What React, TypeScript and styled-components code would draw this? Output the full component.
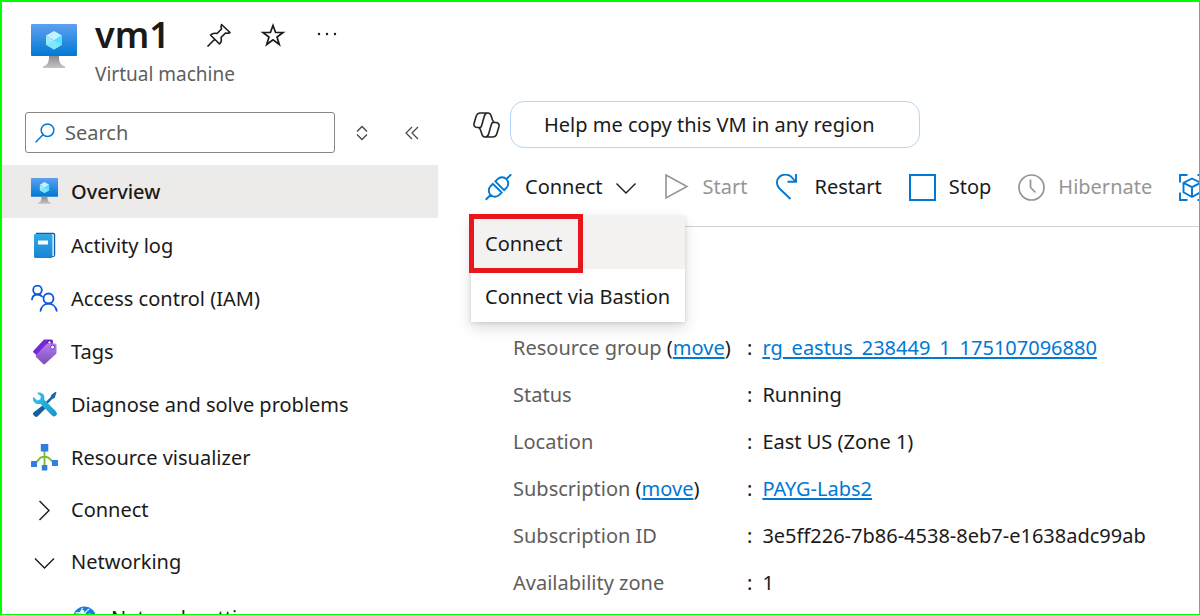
import React from "react";
import styled, { createGlobalStyle, css } from "styled-components";

const GlobalStyle = createGlobalStyle`
  *, *::before, *::after { box-sizing: border-box; }
  body {
    margin: 0;
    background: #fff;
    color: #1b1a19;
    font-family: "Noto Sans", "Open Sans", sans-serif;
    font-size: 20px;
    line-height: 28px;
  }
  button, input { font: inherit; color: inherit; }
  svg { display: block; flex: none; }
`;

const blue = "#0078d4";

const Page = styled.div`
  display: flex;
  flex-direction: column;
  height: 100vh;
  overflow: hidden;
  border: 2px solid #00ff00;
  border-width: 2px 1px 1px 2px;
`;

const Header = styled.header`
  display: flex;
  gap: 18px;
  padding: 10px 28px 0 29px;
  height: 99px;
`;

const HeaderIcon = styled.div`
  padding-top: 12px;
`;

const TitleRow = styled.div`
  display: flex;
  align-items: center;
  gap: 28px;
  height: 46px;
`;

const Title = styled.h1`
  margin: 0 8px 0 0;
  font-size: 36px;
  font-weight: 600;
  line-height: 46px;
`;

const Subtitle = styled.div`
  padding-top: 2px;
  color: #605e5c;
  font-size: 19px;
`;

const IconButton = styled.button`
  display: flex;
  flex: none;
  align-items: center;
  justify-content: center;
  width: 26px;
  height: 26px;
  padding: 0;
  border: 0;
  background: none;
  cursor: pointer;
`;

const Body = styled.div`
  display: flex;
  flex: 1;
  min-height: 0;
`;

const Sidebar = styled.nav`
  flex: none;
  width: 436px;
`;

const SearchRow = styled.div`
  display: flex;
  align-items: center;
  gap: 14px;
  padding: 11px 13px 12px 23px;
`;

const SearchActions = styled.div`
  display: flex;
  gap: 24px;
`;

const SearchBox = styled.label`
  display: flex;
  align-items: center;
  gap: 10px;
  flex: 1;
  min-width: 0;
  height: 41px;
  padding: 0 9px;
  border: 1px solid #8a8886;
  border-radius: 3px;
`;

const SearchInput = styled.input`
  flex: 1;
  min-width: 0;
  padding: 0;
  border: 0;
  outline: 0;
  background: none;
  &::placeholder { color: #605e5c; opacity: 1; }
`;

const NavList = styled.ul`
  margin: 0;
  padding: 0;
  list-style: none;
`;

const rowHeight = { item: 53, group: 52, nested: 60 };

const NavLink = styled.a<{ $active?: boolean; $kind: keyof typeof rowHeight }>`
  display: flex;
  align-items: center;
  gap: 13px;
  height: ${(p) => rowHeight[p.$kind]}px;
  padding-left: ${(p) => (p.$kind === "nested" ? 69 : 29)}px;
  color: inherit;
  text-decoration: none;
  ${(p) =>
    p.$active &&
    css`
      margin-bottom: 1px;
      background: #edebe9;
      font-weight: 500;
    `}
`;

const Main = styled.main`
  flex: 1;
  min-width: 0;
  padding-left: 33px;
`;

const CopilotRow = styled.div`
  display: flex;
  align-items: center;
  gap: 10px;
  padding-left: 2px;
`;

const Suggestion = styled.button`
  min-width: 410px;
  height: 47px;
  padding: 0 33px;
  border: 1px solid #b4d6fa;
  border-radius: 14px;
  background: #fff;
  text-align: left;
  cursor: pointer;
`;

const CommandBar = styled.div`
  position: relative;
  border-bottom: 1px solid #d2d0ce;
`;

const Commands = styled.div`
  display: flex;
  gap: 27px;
  height: 78px;
  padding-left: 14px;
  overflow: hidden;
`;

const Command = styled.button`
  display: flex;
  flex: none;
  align-items: center;
  gap: 13px;
  padding: 0;
  border: 0;
  background: none;
  white-space: nowrap;
  cursor: pointer;
  &:disabled { color: #979593; cursor: default; }
`;

const Menu = styled.div`
  position: absolute;
  top: 68px;
  left: 0;
  background: #fff;
  box-shadow: 0 6px 14px rgba(0, 0, 0, 0.14), 0 1px 4px rgba(0, 0, 0, 0.12);
`;

const MenuItem = styled.button<{ $hovered?: boolean }>`
  display: block;
  width: 100%;
  height: 53px;
  padding: 2px 15px 0 14px;
  border: 0;
  background: ${(p) => (p.$hovered ? "#f3f2f1" : "#fff")};
  text-align: left;
  cursor: pointer;
`;

const Highlight = styled.div`
  position: absolute;
  top: -2px;
  left: -2px;
  width: 114px;
  height: 59px;
  border: 5px solid #e8171b;
  pointer-events: none;
`;

const Details = styled.dl`
  display: grid;
  grid-template-columns: 234px 1fr;
  grid-auto-rows: 47px;
  align-items: center;
  margin: 0;
  padding: 97px 0 0 42px;
`;

const Term = styled.dt`
  color: #605e5c;
  white-space: nowrap;
`;

const Value = styled.dd`
  display: flex;
  gap: 10px;
  margin: 0;
  white-space: nowrap;
  &::before { content: ":"; }
`;

const Dark = styled.span`
  color: #1b1a19;
`;

const Link = styled.a`
  color: ${blue};
  text-decoration: underline;
  text-decoration-thickness: 2px;
  text-underline-offset: 2px;
`;

const VmIcon = ({ size, id }: { size: number; id: string }) => (
  <svg width={size} height={size} viewBox="0 0 46 46" aria-hidden="true">
    <defs>
      <linearGradient id={id} x1="0" y1="0" x2="0" y2="1">
        <stop offset="0" stopColor="#5ea0ef" />
        <stop offset="1" stopColor="#0078d4" />
      </linearGradient>
      <linearGradient id={id + "s"} x1="0" y1="0" x2="0" y2="1">
        <stop offset="0" stopColor="#8c8c8c" />
        <stop offset="1" stopColor="#c4c4c4" />
      </linearGradient>
    </defs>
    <rect width="46" height="32" y="0" rx="1" fill={`url(#${id})`} />
    <path d="M18 32h10c0 6 1 9 6 10.500V44H12v-1.500c5-1.500 6-4.500 6-10.500z" fill={`url(#${id}s)`} />
    <path d="M23 7l8 4.500-8 5-8-5z" fill="#c3f1ff" />
    <path d="M15 11.500l8 5V25.500l-8-4.800z" fill="#9cebff" />
    <path d="M31 11.500l-8 5V25.500l8-4.800z" fill="#50e6ff" />
    <path d="M15 20.700l8-4.200 8 4.200-8 4.800z" fill="#7fe6fb" />
  </svg>
);

const PinIcon = () => (
  <svg width="26" height="26" viewBox="0 0 26 26" fill="none" stroke="#1b1a19" strokeWidth="1.600" strokeLinejoin="round" aria-hidden="true">
    <path d="M1.500 24.500L9 17M15.500 2.500l8.500 8c-1.500 1-3 1-4.500.5l-4.500 4.500c.8 2.500.2 4.800-1.500 6.500L4.500 13c1.800-1.700 4-2.200 6.500-1.500l4.500-4.500c-.6-1.500-.6-3 0-4.500z" />
  </svg>
);

const StarIcon = () => (
  <svg width="26" height="26" viewBox="0 0 26 26" fill="none" stroke="#1b1a19" strokeWidth="1.700" aria-hidden="true">
    <path d="M13 3.500l2.600 7H23l-6 4.600 2.300 7.400-6.300-4.600-6.300 4.600L9 15.100l-6-4.600h7.400z" />
  </svg>
);

const MoreIcon = () => (
  <svg width="26" height="26" viewBox="0 0 26 26" fill="#1b1a19" aria-hidden="true">
    <circle cx="5" cy="12" r="1.200" />
    <circle cx="13" cy="12" r="1.200" />
    <circle cx="21" cy="12" r="1.200" />
  </svg>
);

const SearchIcon = () => (
  <svg width="20" height="20" viewBox="0 0 20 20" fill="none" stroke={blue} strokeWidth="1.500" aria-hidden="true">
    <circle cx="12.500" cy="7.200" r="6.300" />
    <path d="M8 11.800L.6 19.200" />
  </svg>
);

const SortIcon = () => (
  <svg width="14" height="16" viewBox="0 0 14 16" fill="none" stroke="#484644" strokeWidth="1.300" aria-hidden="true">
    <path d="M2 6.500l5-5 5 5M2 9.500l5 5 5-5" />
  </svg>
);

const CollapseIcon = () => (
  <svg width="14" height="14" viewBox="0 0 14 14" fill="none" stroke="#484644" strokeWidth="1.200" aria-hidden="true">
    <path d="M7 1L1 7l6 6M13 1L7 7l6 6" />
  </svg>
);

const LogIcon = () => (
  <svg width="27" height="27" viewBox="0 0 27 27" aria-hidden="true">
    <defs>
      <linearGradient id="log" x1="0" y1="0" x2="0" y2="1">
        <stop offset="0" stopColor="#32a9e4" />
        <stop offset="1" stopColor="#1784d6" />
      </linearGradient>
    </defs>
    <path d="M5 .8h17.500a1.700 1.700 0 0 1 1.700 1.700V23a2 2 0 0 1-2 2H5z" fill="#0f5ea8" />
    <path d="M5 2.200h17.800V24H6z" fill="#fff" />
    <path d="M3 3.500C3 2 4 1.500 5 2h15a1.500 1.500 0 0 1 1.500 1.500V24.500a1.500 1.500 0 0 1-1.500 1.500H4.500A1.500 1.500 0 0 1 3 24.500z" fill="url(#log)" />
    <rect x="7" y="8.500" width="10" height="4" rx=".5" fill="#fff" />
  </svg>
);

const PeopleIcon = () => (
  <svg width="27" height="27" viewBox="0 0 27 27" fill="none" stroke="#0f56d9" strokeWidth="1.800" strokeLinecap="round" aria-hidden="true">
    <circle cx="6.500" cy="5" r="4.300" />
    <path d="M1 14.500c.4-3 2.500-5 5.500-5 2 0 3.500.7 4.500 2" />
    <circle cx="17.500" cy="13.500" r="5" />
    <path d="M9.500 25.800c.8-4.300 4-7.200 8-7.200s7.300 2.900 8.200 7.200" />
  </svg>
);

const TagIcon = () => (
  <svg width="27" height="27" viewBox="0 0 27 27" aria-hidden="true">
    <defs>
      <linearGradient id="tag" x1="0" y1="0" x2="0" y2="1">
        <stop offset="0" stopColor="#b77af4" />
        <stop offset="1" stopColor="#7a50b4" />
      </linearGradient>
    </defs>
    <path d="M13 1.500h7.500a1.500 1.500 0 0 1 1.500 1.500v7L9.500 20.500 2.500 14.500a1.200 1.200 0 0 1 0-1.800z" fill="#7529d3" />
    <circle cx="18.500" cy="4.500" r="1.700" fill="#fff" stroke="#4a1795" />
    <path d="M17 5.500h7a1.500 1.500 0 0 1 1.500 1.500v7.500a2 2 0 0 1-.6 1.400L14 26a1.300 1.300 0 0 1-1.800 0L5 19a1.300 1.300 0 0 1 0-1.800L15.500 6a2 2 0 0 1 1.500-.5z" fill="url(#tag)" />
    <circle cx="21.500" cy="9.200" r="2" fill="#fff" stroke="#6a35b0" />
  </svg>
);

const ToolsIcon = () => (
  <svg width="27" height="27" viewBox="0 0 27 27" aria-hidden="true">
    <defs>
      <linearGradient id="wrench" x1="0" y1="0" x2="1" y2="1">
        <stop offset="0" stopColor="#36c5ea" />
        <stop offset="1" stopColor="#1a93c8" />
      </linearGradient>
    </defs>
    <path d="M25.500 1.500l-1-.7-4 3-1 2.500-6 6 1.800 1.800 6-6 2.300-1.200z" fill="#1569a8" />
    <path d="M11.500 14.500l3 3-7.700 7.700a2.200 2.200 0 0 1-3 0l-1.300-1.300a1.600 1.600 0 0 1 0-2.400z" fill="#12609f" />
    <path d="M6 2c3-1.200 6.300.2 7.300 3.200.3 1.200.2 2.300-.2 3.400L25 20.500a3 3 0 0 1 0 4 3 3 0 0 1-4 0L9.300 12.800C6 14 3 12 2.200 9.500c-.4-1.300-.3-2.600.2-3.700l3.800 3.600 3-.8.700-3z" fill="url(#wrench)" />
  </svg>
);

const VisualizerIcon = () => (
  <svg width="27" height="27" viewBox="0 0 27 27" aria-hidden="true">
    <path d="M13.500 7v15M13.500 13h-2C8 13 8 17 3.500 19.500M13.500 13h2c3.500 0 3.500 4 8 6" fill="none" stroke="#76bc2d" strokeWidth="1.800" />
    <g fill="#2f7fe0">
      <rect x="9.800" y="0" width="7.500" height="7.500" rx=".5" />
      <rect x="0" y="17" width="6" height="6" rx=".5" />
      <rect x="10.800" y="21" width="5.500" height="5.500" rx=".5" />
      <rect x="21" y="16" width="6" height="6" rx=".5" />
    </g>
  </svg>
);

const ChevronIcon = ({ direction, box = 27 }: { direction: "right" | "down"; box?: number }) => (
  <svg width={box} height="27" viewBox={`${(27 - box) / 2} 0 ${box} 27`} fill="none" stroke="#1b1a19" strokeWidth="1.400" aria-hidden="true">
    <path d={direction === "right" ? "M8.500 4l9.500 9.500-9.500 9.500" : "M4 9.500l9.500 9.500 9.500-9.500"} />
  </svg>
);

const GlobeIcon = () => (
  <svg width="27" height="27" viewBox="0 0 27 27" aria-hidden="true">
    <circle cx="13.500" cy="13" r="11.500" fill="#1b7ddb" />
    <path d="M4.500 8c5-1 10 0 18 6M11.500 3c-1 4-3 6-7 10M18.500 4c-3 1-6 5-8 14" stroke="#d5f0ff" strokeWidth="1.300" fill="none" />
    <circle cx="11.500" cy="7" r="2" fill="#fff" />
    <circle cx="18.500" cy="10" r="1.600" fill="#fff" />
  </svg>
);

const CopilotIcon = () => (
  <svg width="27" height="26" viewBox="0 0 27 26" fill="none" stroke="#242424" strokeWidth="1.600" strokeLinejoin="round" aria-hidden="true">
    <path id="lobe" d="M8.500 15.500H4.200C1.700 15.500.5 13.800 1.100 11.300L3 4.800C3.700 2.300 5.200 1 7.500 1H15c1.700 0 2.500.8 3 2.400l1.300 4.200c.3 1.200.8 1.900 2 2.100M14.500 1c-1.800.2-2.700 1.400-3.200 3.200L8.500 14c-.3 1-.9 1.500-2 1.500" />
    <use href="#lobe" transform="rotate(180 13.500 13)" />
  </svg>
);

const PlugIcon = () => (
  <svg width="27" height="27" viewBox="0 0 27 27" fill="none" stroke={blue} strokeWidth="1.900" aria-hidden="true">
    <g transform="translate(13.500 13) rotate(-45)">
      <path d="M-18 0h7M18 0h-7M-1.700 -6.200V6.200H-5A6.200 6.200 0 0 1 -5 -6.200zM1.700 -6.200V6.200H5A6.200 6.200 0 0 0 5 -6.200z" />
    </g>
  </svg>
);

const PlayIcon = () => (
  <svg width="27" height="27" viewBox="0 0 27 27" fill="none" stroke="#979593" strokeWidth="1.600" aria-hidden="true">
    <path d="M3 1v23l21-11.500z" />
  </svg>
);

const RestartIcon = () => (
  <svg width="27" height="27" viewBox="0 0 27 27" fill="none" stroke={blue} strokeWidth="1.900" aria-hidden="true">
    <path d="M16.500 25L5.500 14.500C2 11 2 6 5.500 2.800c3.700-3.300 9.500-2.800 12.500.7l3 3.500M22 0v7.800h-8.500" />
  </svg>
);

const StopIcon = () => (
  <svg width="27" height="27" viewBox="0 0 27 27" fill="none" stroke={blue} strokeWidth="2" aria-hidden="true">
    <rect x="1" y="0" width="25" height="25" transform="translate(0 1)" />
  </svg>
);

const ClockIcon = () => (
  <svg width="27" height="27" viewBox="0 0 27 27" fill="none" stroke="#979593" strokeWidth="1.700" aria-hidden="true">
    <circle cx="13.500" cy="13.500" r="12.500" />
    <path d="M12.500 5.500v8l5 5" />
  </svg>
);

const CaptureIcon = () => (
  <svg width="27" height="27" viewBox="0 0 27 27" fill="none" stroke={blue} strokeWidth="1.900" aria-hidden="true">
    <path d="M1 8.500V1h7.500M18.500 1H26v7.500M26 18.500V26h-7.500M8.500 26H1v-7.500" />
    <path d="M13 4.500l8.500 4.300v9.500L13 23l-8.500-4.700V8.800zM4.500 8.800L13 13.200l8.500-4.400M13 13.200V23" />
  </svg>
);

const navItems: {
  label: string;
  icon: React.ReactNode;
  active?: boolean;
  kind?: keyof typeof rowHeight;
}[] = [
  { label: "Overview", icon: <VmIcon size={27} id="vmNav" />, active: true },
  { label: "Activity log", icon: <LogIcon /> },
  { label: "Access control (IAM)", icon: <PeopleIcon /> },
  { label: "Tags", icon: <TagIcon /> },
  { label: "Diagnose and solve problems", icon: <ToolsIcon /> },
  { label: "Resource visualizer", icon: <VisualizerIcon /> },
  { label: "Connect", icon: <ChevronIcon direction="right" />, kind: "group" },
  { label: "Networking", icon: <ChevronIcon direction="down" />, kind: "group" },
  { label: "Network settings", icon: <GlobeIcon />, kind: "nested" },
];

const commands: { label: string; icon: React.ReactNode; disabled?: boolean; menu?: boolean }[] = [
  { label: "Connect", icon: <PlugIcon />, menu: true },
  { label: "Start", icon: <PlayIcon />, disabled: true },
  { label: "Restart", icon: <RestartIcon /> },
  { label: "Stop", icon: <StopIcon /> },
  { label: "Hibernate", icon: <ClockIcon />, disabled: true },
];

const details: { term: string; movable?: boolean; value: string; link?: boolean }[] = [
  { term: "Resource group", movable: true, value: "rg_eastus_238449_1_175107096880", link: true },
  { term: "Status", value: "Running" },
  { term: "Location", value: "East US (Zone 1)" },
  { term: "Subscription", movable: true, value: "PAYG-Labs2", link: true },
  { term: "Subscription ID", value: "3e5ff226-7b86-4538-8eb7-e1638adc99ab" },
  { term: "Availability zone", value: "1" },
];

export default function App() {
  return (
    <Page>
      <GlobalStyle />
      <Header>
        <HeaderIcon>
          <VmIcon size={46} id="vmHead" />
        </HeaderIcon>
        <div>
          <TitleRow>
            <Title>vm1</Title>
            <IconButton aria-label="Pin"><PinIcon /></IconButton>
            <IconButton aria-label="Favorite"><StarIcon /></IconButton>
            <IconButton aria-label="More"><MoreIcon /></IconButton>
          </TitleRow>
          <Subtitle>Virtual machine</Subtitle>
        </div>
      </Header>
      <Body>
        <Sidebar>
          <SearchRow>
            <SearchBox>
              <SearchIcon />
              <SearchInput type="text" placeholder="Search" aria-label="Search" />
            </SearchBox>
            <SearchActions>
              <IconButton aria-label="Expand or collapse all"><SortIcon /></IconButton>
              <IconButton aria-label="Hide menu"><CollapseIcon /></IconButton>
            </SearchActions>
          </SearchRow>
          <NavList>
            {navItems.map((item, i) => (
              <li key={i}>
                <NavLink href="#" $active={item.active} $kind={item.kind ?? "item"}>
                  {item.icon}
                  {item.label}
                </NavLink>
              </li>
            ))}
          </NavList>
        </Sidebar>
        <Main>
          <CopilotRow>
            <CopilotIcon />
            <Suggestion>Help me copy this VM in any region</Suggestion>
          </CopilotRow>
          <CommandBar>
            <Commands>
              {commands.map((c) => (
                <Command key={c.label} disabled={c.disabled}>
                  {c.icon}
                  {c.label}
                  {c.menu && <ChevronIcon direction="down" box={20} />}
                </Command>
              ))}
              <Command aria-label="Capture"><CaptureIcon /></Command>
            </Commands>
            <Menu>
              <MenuItem $hovered>Connect</MenuItem>
              <MenuItem>Connect via Bastion</MenuItem>
              <Highlight />
            </Menu>
          </CommandBar>
          <Details>
            {details.map((d) => (
              <React.Fragment key={d.term}>
                <Term>
                  {d.term}
                  {d.movable && <Dark> (<Link href="#">move</Link>)</Dark>}
                </Term>
                <Value>{d.link ? <Link href="#">{d.value}</Link> : d.value}</Value>
              </React.Fragment>
            ))}
          </Details>
        </Main>
      </Body>
    </Page>
  );
}
